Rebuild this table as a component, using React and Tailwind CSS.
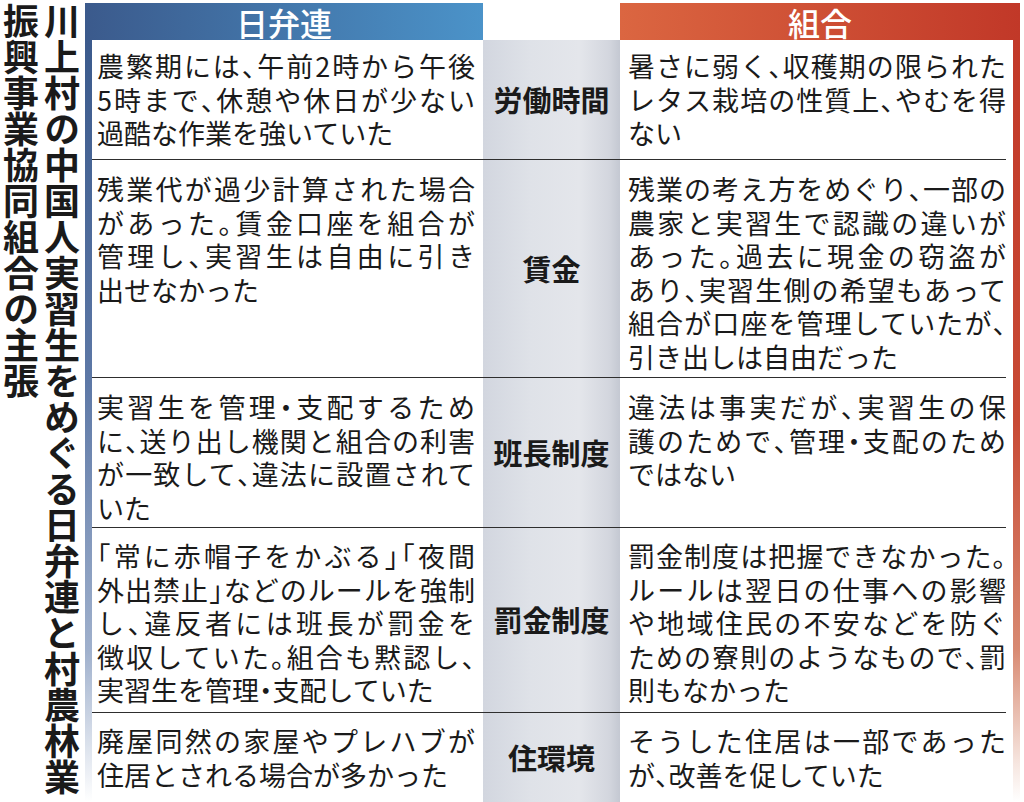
// Comparison table: 日弁連 vs 組合, with a vertical headline on the left.
const rows = [
  {
    label: '労働時間',
    h: 'h-[120px]',
    pt: 'pt-[9px]',
    left: ['農繁期には、午前2時から午後', '5時まで、休憩や休日が少ない', '過酷な作業を強いていた'],
    right: ['暑さに弱く、収穫期の限られた', 'レタス栽培の性質上、やむを得', 'ない'],
  },
  {
    label: '賃金',
    h: 'h-[218px]',
    pt: 'pt-[12px]',
    left: ['残業代が過少計算された場合', 'があった。賃金口座を組合が', '管理し、実習生は自由に引き', '出せなかった'],
    right: [
      '残業の考え方をめぐり、一部の',
      '農家と実習生で認識の違いが',
      'あった。過去に現金の窃盗が',
      'あり、実習生側の希望もあって',
      '組合が口座を管理していたが、',
      '引き出しは自由だった',
    ],
  },
  {
    label: '班長制度',
    h: 'h-[150px]',
    pt: 'pt-[12px]',
    left: ['実習生を管理・支配するため', 'に、送り出し機関と組合の利害', 'が一致して、違法に設置されて', 'いた'],
    right: ['違法は事実だが、実習生の保', '護のためで、管理・支配のため', 'ではない'],
  },
  {
    label: '罰金制度',
    h: 'h-[185px]',
    pt: 'pt-[11px]',
    left: ['「常に赤帽子をかぶる」「夜間', '外出禁止」などのルールを強制', 'し、違反者には班長が罰金を', '徴収していた。組合も黙認し、', '実習生を管理・支配していた'],
    right: ['罰金制度は把握できなかった。', 'ルールは翌日の仕事への影響', 'や地域住民の不安などを防ぐ', 'ための寮則のようなもので、罰', '則もなかった'],
  },
  {
    label: '住環境',
    h: 'h-[89px]',
    pt: 'pt-[11px]',
    left: ['廃屋同然の家屋やプレハブが', '住居とされる場合が多かった'],
    right: ['そうした住居は一部であった', 'が、改善を促していた'],
    last: true,
  },
]

// punctuation is set half-width, as in the printed table
function Punct({ text }) {
  return text.split(/([、。・「」])/).map((s, i) =>
    /^[、。・「」]$/.test(s) ? (
      <span key={i} className="[font-feature-settings:'halt']">
        {s}
      </span>
    ) : (
      s
    )
  )
}

function Lines({ lines }) {
  return lines.map((t, i) => (
    <div
      key={i}
      className={
        'whitespace-nowrap ' + (i < lines.length - 1 ? '[text-align-last:justify]' : '')
      }
    >
      <Punct text={t} />
    </div>
  ))
}

export default function App() {
  return (
    <div
      className="flex h-[802px] w-[1024px] overflow-hidden bg-white text-[#1a1a1a]"
      style={{ fontFamily: '"Noto Sans CJK JP", "Noto Sans", sans-serif' }}
    >
      {/* vertical headline, two columns read right to left */}
      <div className="flex h-full w-[85px] shrink-0 gap-[1px] pl-[1px] pt-[3px] text-[36px] font-bold leading-[40px]">
        <div className="h-[800px] w-[40px] whitespace-nowrap [writing-mode:vertical-rl]">
          振興事業協同組合の主張
        </div>
        <div className="h-[800px] w-[40px] whitespace-nowrap [writing-mode:vertical-rl]">
          川上村の中国人実習生をめぐる日弁連と村農林業
        </div>
      </div>

      <div className="flex w-[935px] flex-col">
        {/* headers */}
        <div className="mt-[3px] flex h-[37px]">
          <div className="flex w-[398px] items-center justify-center bg-[linear-gradient(to_right,#3b5a8c,#4b93c9)] text-[32px] font-medium leading-none text-white">
            日弁連
          </div>
          <div className="w-[137px]" />
          <div className="flex w-[400px] items-center justify-center bg-[linear-gradient(to_right,#db6641,#c13828)] text-[32px] font-medium leading-none text-white">
            組合
          </div>
        </div>

        {/* body */}
        <div className="flex flex-1">
          <div className="w-[7px] bg-[linear-gradient(to_bottom,#3b5a8c,#5d78a6_45%,#9fb0cc_80%,#ffffff)]" />
          <div className="flex w-[914px] flex-col">
            {rows.map((r) => (
              <div
                key={r.label}
                className={
                  'grid grid-cols-[391px_137px_386px] box-border ' +
                  r.h +
                  (r.last ? '' : ' border-b-[1.5px] border-[#2e2e2e]')
                }
              >
                <div className={'pl-[5px] pr-[8px] text-[27px] leading-[33.5px] ' + r.pt}>
                  <Lines lines={r.left} />
                </div>
                <div className="flex items-center justify-center bg-[linear-gradient(to_right,#d2d6df,#dfe2e8_35%,#e4e6eb_70%,#d3d6de_92%,#c4c8d2)] text-[29px] font-bold">
                  {r.label}
                </div>
                <div className={'pl-[8px] text-[27px] leading-[33.5px] ' + r.pt}>
                  <Lines lines={r.right} />
                </div>
              </div>
            ))}
          </div>
          <div className="w-[7px]" />
          <div className="w-[7px] bg-[linear-gradient(to_bottom,#c23929,#c84a35_50%,#d88a72_80%,#f6e6e0_95%,#ffffff)]" />
        </div>
      </div>
    </div>
  )
}
